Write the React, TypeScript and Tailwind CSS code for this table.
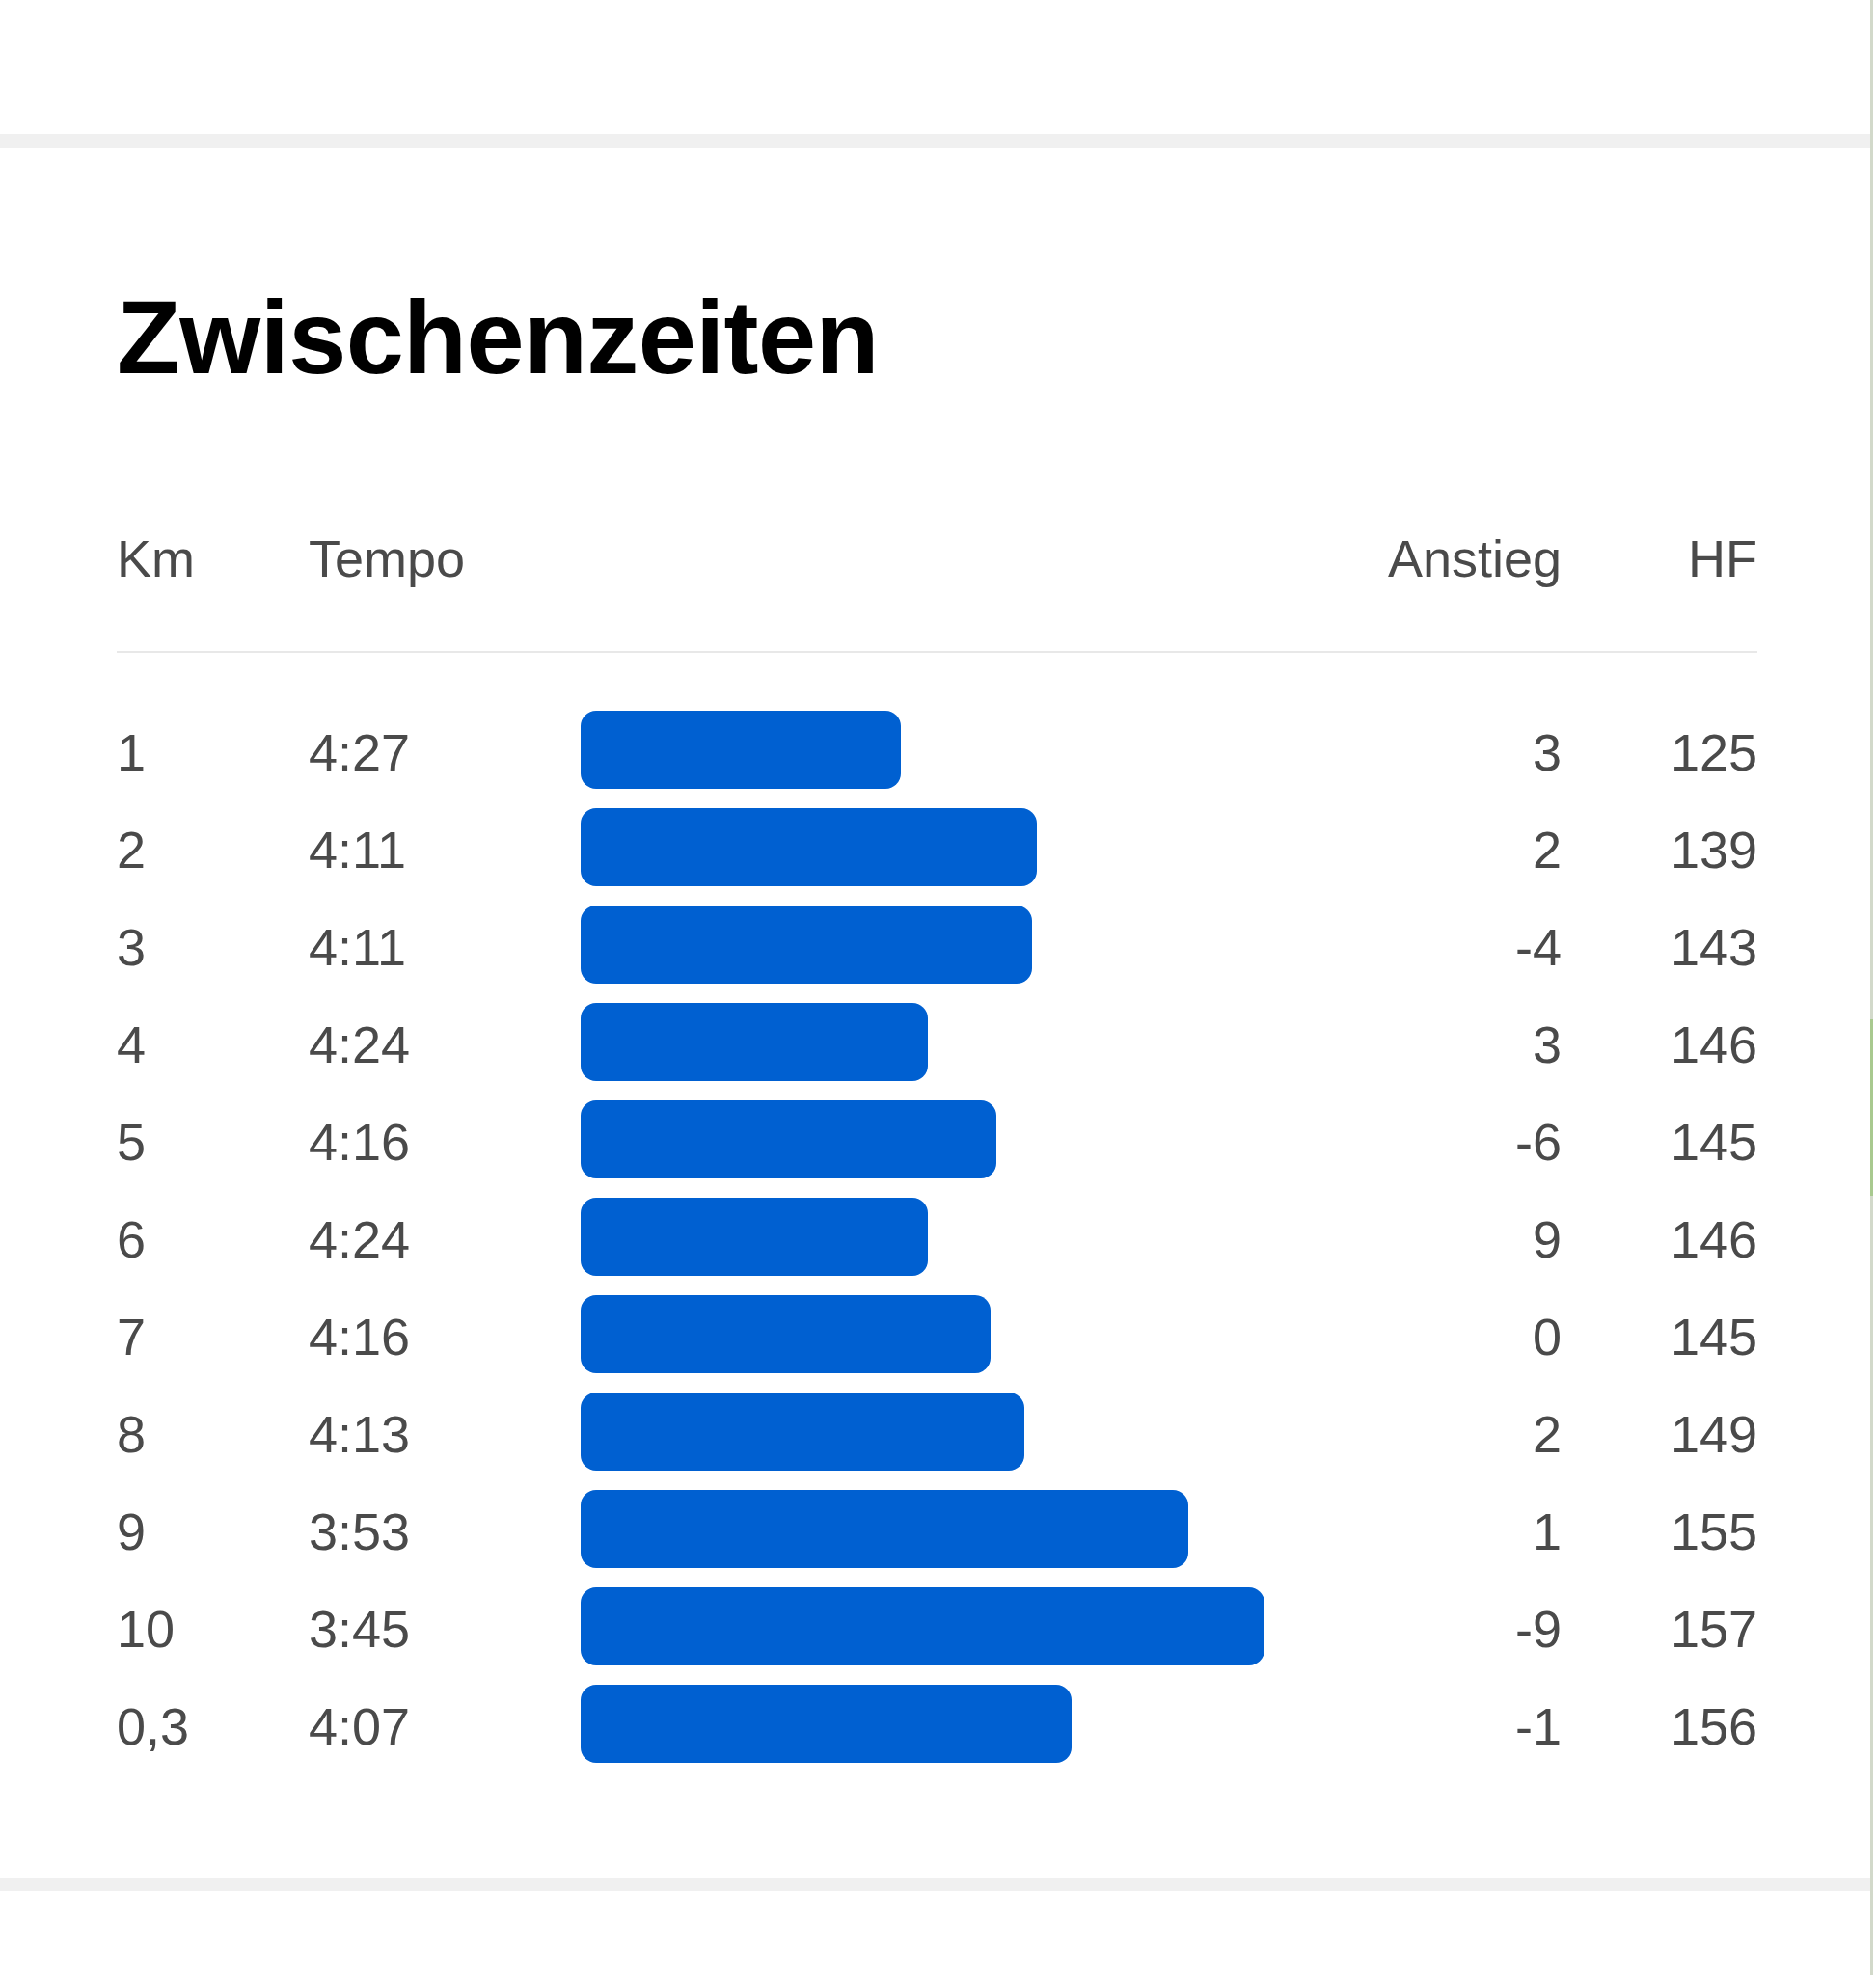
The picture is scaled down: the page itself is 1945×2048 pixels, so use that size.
const splits = [
  { km: "1", pace: "4:27", bar: 332, elev: "3", hr: "125" },
  { km: "2", pace: "4:11", bar: 473, elev: "2", hr: "139" },
  { km: "3", pace: "4:11", bar: 468, elev: "-4", hr: "143" },
  { km: "4", pace: "4:24", bar: 360, elev: "3", hr: "146" },
  { km: "5", pace: "4:16", bar: 431, elev: "-6", hr: "145" },
  { km: "6", pace: "4:24", bar: 360, elev: "9", hr: "146" },
  { km: "7", pace: "4:16", bar: 425, elev: "0", hr: "145" },
  { km: "8", pace: "4:13", bar: 460, elev: "2", hr: "149" },
  { km: "9", pace: "3:53", bar: 630, elev: "1", hr: "155" },
  { km: "10", pace: "3:45", bar: 709, elev: "-9", hr: "157" },
  { km: "0,3", pace: "4:07", bar: 509, elev: "-1", hr: "156" },
];

export default function App() {
  return (
    <div className="flex h-[2048px] w-[1945px] overflow-hidden bg-white font-['Liberation_Sans',Arial,sans-serif]">
      <main className="w-[1939px] shrink-0">
        <div className="h-[139px]" />
        <div className="h-[14px] bg-[#f0f0f0]" />

        {/* Splits */}
        <section className="pl-[121px] pr-[117px] pt-[143px]">
          <h1 className="text-[108px] font-bold leading-none tracking-[-0.6px] text-black">Zwischenzeiten</h1>

          <div className="mt-[148px] flex text-[54px] leading-none text-[#4a4a4a]">
            <span className="w-[199px]">Km</span>
            <span className="flex-1">Tempo</span>
            <span className="w-[200px] text-right">Anstieg</span>
            <span className="w-[203px] text-right">HF</span>
          </div>

          <div className="mt-[69px] h-[2px] bg-[#e8e8e8]" />

          <div className="mt-[50px]">
            {splits.map((s) => (
              <div key={s.km} className="flex h-[101px] items-center text-[54px] leading-none text-[#4a4a4a]">
                <span className="w-[199px] pt-[5px]">{s.km}</span>
                <span className="w-[282px] pt-[5px]">{s.pace}</span>
                <div className="flex-1">
                  <div className="h-[81px] rounded-[16px] bg-[#0060d1]" style={{ width: s.bar }} />
                </div>
                <span className="w-[200px] pt-[5px] text-right">{s.elev}</span>
                <span className="w-[203px] pt-[5px] text-right">{s.hr}</span>
              </div>
            ))}
          </div>
        </section>

        <div className="mt-[109px] h-[14px] bg-[#f0f0f0]" />
      </main>

      <div className="flex w-[3px] shrink-0 flex-col">
        <div className="h-[1057px] bg-[#d2d9ca]" />
        <div className="h-[183px] bg-[#a8c98f]" />
        <div className="flex-1 bg-[#d2d9ca]" />
      </div>
    </div>
  );
}
